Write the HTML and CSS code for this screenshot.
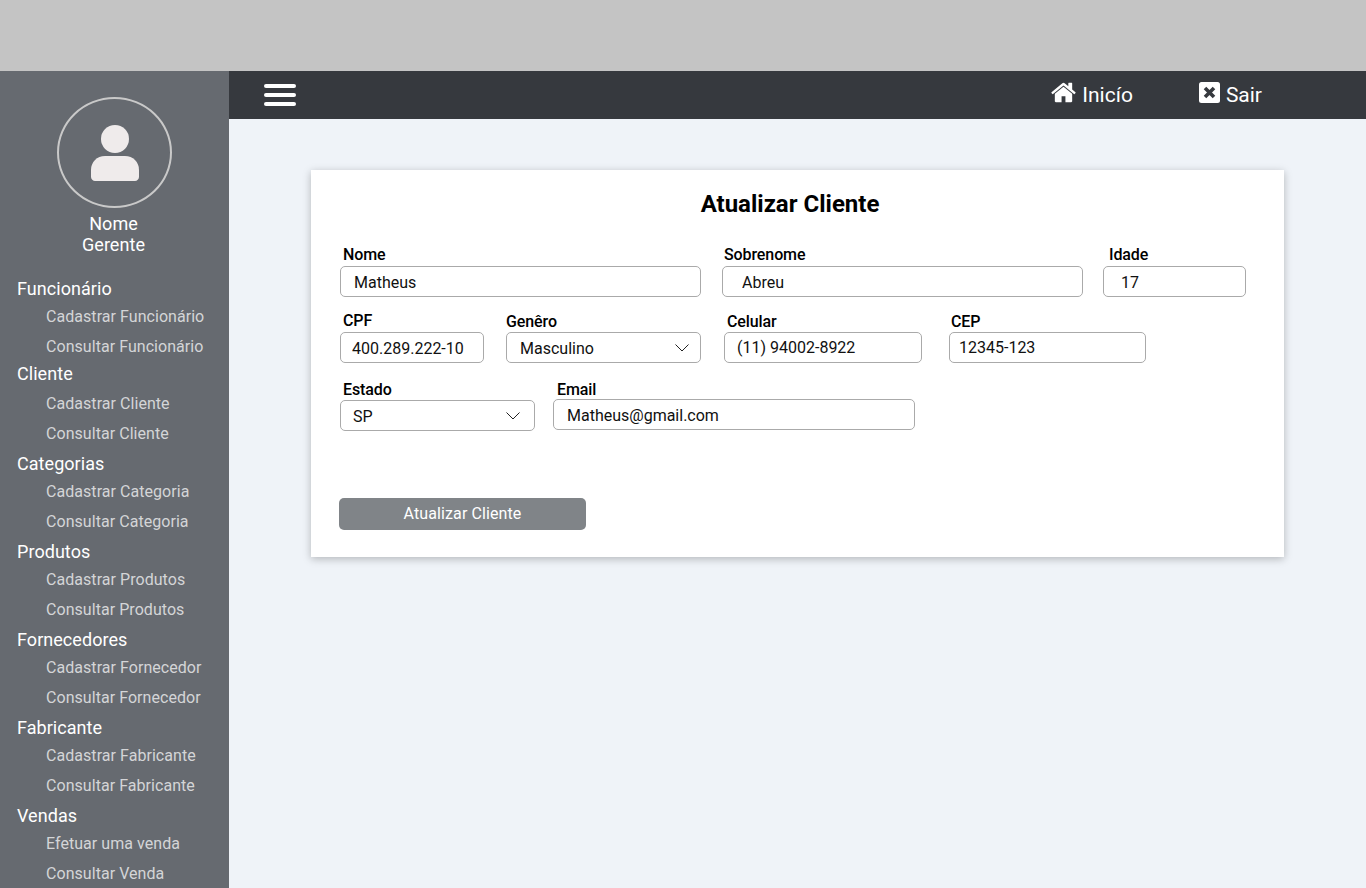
FILE: index.html
```html
<!DOCTYPE html>
<html lang="pt-BR">
<head>
<meta charset="utf-8">
<title>Atualizar Cliente</title>
<link rel="stylesheet" href="styles.css">
</head>
<body>
  <div class="browser-strip"></div>
  <div class="app">
    <aside class="sidebar">
      <div class="profile">
        <div class="avatar">
          <svg width="48" height="56" viewBox="0 0 48 56"><circle cx="24" cy="14" r="14" fill="#efebeb"/><path d="M14 31h20c8 0 14 6 14 14v7c0 2-2 4-4 4H4c-2 0-4-2-4-4v-7c0-8 6-14 14-14z" fill="#efebeb"/></svg>
        </div>
        <div class="profile-name">Nome<br>Gerente</div>
      </div>
      <nav class="menu">
        <div class="group group-first">
          <div class="group-title">Funcionário</div>
          <a class="group-link">Cadastrar Funcionário</a>
          <a class="group-link">Consultar Funcionário</a>
        </div>
        <div class="group group-wide">
          <div class="group-title">Cliente</div>
          <a class="group-link">Cadastrar Cliente</a>
          <a class="group-link">Consultar Cliente</a>
        </div>
        <div class="group">
          <div class="group-title">Categorias</div>
          <a class="group-link">Cadastrar Categoria</a>
          <a class="group-link">Consultar Categoria</a>
        </div>
        <div class="group">
          <div class="group-title">Produtos</div>
          <a class="group-link">Cadastrar Produtos</a>
          <a class="group-link">Consultar Produtos</a>
        </div>
        <div class="group">
          <div class="group-title">Fornecedores</div>
          <a class="group-link">Cadastrar Fornecedor</a>
          <a class="group-link">Consultar Fornecedor</a>
        </div>
        <div class="group">
          <div class="group-title">Fabricante</div>
          <a class="group-link">Cadastrar Fabricante</a>
          <a class="group-link">Consultar Fabricante</a>
        </div>
        <div class="group">
          <div class="group-title">Vendas</div>
          <a class="group-link">Efetuar uma venda</a>
          <a class="group-link">Consultar Venda</a>
        </div>
      </nav>
    </aside>

    <div class="main">
      <header class="topbar">
        <div class="burger"><span></span><span></span><span></span></div>
        <a class="top-link top-link-home">
          <svg width="27" height="27" viewBox="0 0 1792 1792"><path fill="#fff" d="M1472 992v480q0 26-19 45t-45 19h-384v-384h-256v384h-384q-26 0-45-19t-19-45v-480q0-1 .5-3t.5-3l575-474 575 474q1 2 1 6zm223-69l-62 74q-8 9-21 11h-3q-13 0-21-7l-692-577-692 577q-12 8-24 7-13-2-21-11l-62-74q-8-10-7-23.500t11-21.500l719-599q32-26 76-26t76 26l244 204v-195q0-14 9-23t23-9h192q14 0 23 9t9 23v408l219 182q10 8 11 21.500t-7 23.500z"/></svg>
          Inicío
        </a>
        <a class="top-link">
          <svg width="21" height="21" viewBox="0 0 21 21"><rect width="21" height="21" rx="2.500" fill="#fff"/><path d="M6 6l9 9M15 6l-9 9" fill="none" stroke="#36393e" stroke-width="3.600"/></svg>
          Sair
        </a>
      </header>

      <section class="content">
        <div class="card">
          <h1 class="card-title">Atualizar Cliente</h1>
          <form class="client-form">
            <div class="form-row row-one">
              <div class="field w-361"><label>Nome</label><input type="text" class="pad-14" value="Matheus"></div>
              <div class="field w-361 ml-21"><label class="label-close">Sobrenome</label><input type="text" class="pad-20" value="Abreu"></div>
              <div class="field w-143 ml-20"><label class="label-wide">Idade</label><input type="text" class="pad-18" value="17"></div>
            </div>
            <div class="form-row row-two">
              <div class="field w-144"><label>CPF</label><input type="text" class="pad-12" value="400.289.222-10"></div>
              <div class="field w-195 ml-22"><label class="label-flush">Genêro</label>
                <div class="select-wrap">
                  <select class="pad-14"><option>Masculino</option></select>
                  <svg class="chevron" width="14" height="8" viewBox="0 0 14 8"><path d="M.5.500L7 7 13.500.500" fill="none" stroke="#222" stroke-width="1"/></svg>
                </div>
              </div>
              <div class="field w-198 ml-23"><label class="label-low">Celular</label><input type="text" class="pad-13 text-up" value="(11) 94002-8922"></div>
              <div class="field w-197 ml-27"><label class="label-low">CEP</label><input type="text" class="pad-10 text-up" value="12345-123"></div>
            </div>
            <div class="form-row row-three">
              <div class="field w-195"><label class="label-low">Estado</label>
                <div class="select-wrap">
                  <select class="pad-13"><option>SP</option></select>
                  <svg class="chevron chevron-short" width="14" height="8" viewBox="0 0 14 8"><path d="M.5.500L7 7 13.500.500" fill="none" stroke="#222" stroke-width="1"/></svg>
                </div>
              </div>
              <div class="field w-362 ml-18 field-raised"><label>Email</label><input type="text" class="pad-14" value="Matheus@gmail.com"></div>
            </div>
            <button type="button" class="submit-btn">Atualizar Cliente</button>
          </form>
        </div>
      </section>
    </div>
  </div>
</body>
</html>
```

FILE: styles.css
```css
* { box-sizing: border-box; }

html, body {
  margin: 0;
  height: 100%;
  overflow: hidden;
  font-family: Roboto, "Liberation Sans", sans-serif;
}

.browser-strip {
  height: 71px;
  background: #c4c4c4;
}

.app {
  display: flex;
  height: 817px;
}

/* sidebar */
.sidebar {
  width: 229px;
  flex: none;
  overflow: hidden;
  background: #666a70;
  color: #fff;
}

.profile {
  display: flex;
  flex-direction: column;
  align-items: center;
  padding-top: 26px;
}

.avatar {
  width: 115px;
  height: 111px;
  display: flex;
  align-items: center;
  justify-content: center;
  border: 2px solid #c9c9c9;
  border-radius: 50%;
}

.profile-name {
  margin-top: 5px;
  padding-right: 2px;
  font-size: 18px;
  line-height: 21px;
  text-align: center;
  letter-spacing: .05px;
}

.menu { margin-top: 22px; }

.group { margin-bottom: 3px; padding-left: 17px; }
.group-first { margin-bottom: 0; }
.group-wide .group-title { margin-bottom: 4px; }

.group-title {
  margin-bottom: 2px;
  font-size: 18px;
  line-height: 23px;
  letter-spacing: .05px;
}

.group-link {
  display: block;
  height: 30px;
  line-height: 30px;
  padding-left: 29px;
  font-size: 16px;
  letter-spacing: .05px;
  color: #d4d5d7;
  white-space: nowrap;
}

/* top bar */
.main {
  flex: 1;
  display: flex;
  flex-direction: column;
  background: #eff3f8;
}

.topbar {
  height: 48px;
  flex: none;
  display: flex;
  align-items: center;
  padding: 0 104px 0 35px;
  background: #36393e;
}

.burger { margin-right: auto; width: 32px; }

.burger span {
  display: block;
  height: 4px;
  margin: 5px 0;
  border-radius: 2px;
  background: #fff;
}

.top-link {
  display: flex;
  align-items: center;
  gap: 6px;
  font-size: 21px;
  color: #fff;
}

.top-link svg { margin-top: -6px; }
.top-link-home { margin-right: 66px; gap: 5px; }

/* form card */
.content { padding: 51px 82px; }

.card {
  width: 973px;
  height: 387px;
  padding: 21px 29px 0;
  background: #fff;
  box-shadow: 0 2px 8px rgba(0, 0, 0, .25);
}

.card-title {
  margin: 0;
  padding-right: 15px;
  font-size: 24px;
  line-height: 26px;
  font-weight: 700;
  text-align: center;
  color: #000;
}

.form-row { display: flex; align-items: flex-end; }
.row-one { margin-top: 28px; }
.row-two { margin-top: 14px; }
.row-three { margin-top: 17px; }

.field label {
  display: block;
  height: 19px;
  line-height: 19px;
  padding-left: 3px;
  margin-bottom: 2px;
  font-size: 16px;
  font-weight: 500;
  color: #000;
  letter-spacing: -.1px;
}

.field .label-wide { padding-left: 6px; }
.field .label-flush { padding-left: 0; margin-bottom: 1px; }
.field .label-close { padding-left: 2px; }
.field .label-low { margin-bottom: 1px; }
.ml-27 .label-low { padding-left: 2px; }
.field-raised { margin-bottom: 1px; }
.field-raised label { padding-left: 4px; }
.field.field-raised label { margin-bottom: 0; }

.field input,
.field select {
  display: block;
  width: 100%;
  height: 31px;
  padding-top: 2px;
  border: 1px solid #aaa;
  border-radius: 5px;
  background: #fff;
  font-family: inherit;
  font-size: 16px;
  color: #111;
  outline: none;
  appearance: none;
}

.select-wrap { position: relative; }

.chevron {
  position: absolute;
  right: 12px;
  top: 12px;
}

.chevron-short { right: 15px; }

.w-143 { width: 143px; }
.w-144 { width: 144px; }
.w-195 { width: 195px; }
.w-197 { width: 197px; }
.w-198 { width: 198px; }
.w-361 { width: 361px; }
.w-362 { width: 362px; }

.ml-18 { margin-left: 18px; }
.ml-20 { margin-left: 20px; }
.ml-21 { margin-left: 21px; }
.ml-22 { margin-left: 22px; }
.ml-23 { margin-left: 23px; }
.ml-27 { margin-left: 27px; }

.field .pad-10 { padding-left: 9px; }
.field .pad-12 { padding-left: 11px; }
.field .pad-13 { padding-left: 12px; }
.field .pad-14 { padding-left: 13px; }
.field .pad-18 { padding-left: 17px; }
.field .pad-20 { padding-left: 19px; }
.field .text-up { padding-top: 0; }

.submit-btn {
  display: block;
  width: 247px;
  height: 32px;
  margin: 67px 0 0 -1px;
  padding-bottom: 3px;
  border: 0;
  border-radius: 5px;
  background: #808488;
  font-family: inherit;
  font-size: 16px;
  font-weight: 400;
  letter-spacing: .1px;
  color: #fff;
}
```
